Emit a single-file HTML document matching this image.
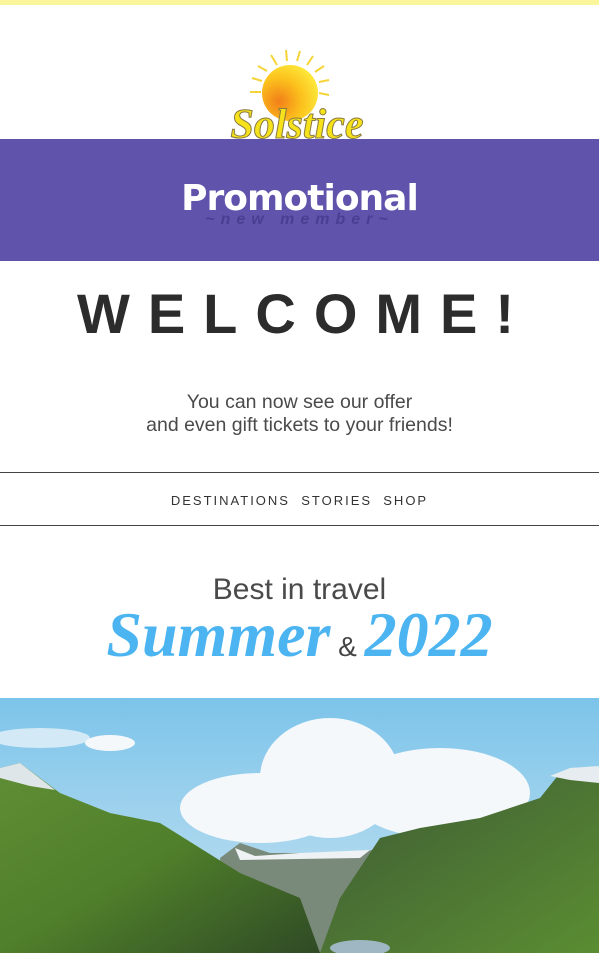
<!DOCTYPE html>
<html><head><meta charset="utf-8"><style>
*{margin:0;padding:0;box-sizing:border-box}
body{width:599px;height:953px;overflow:hidden;background:#fff;font-family:"Liberation Sans",sans-serif;position:relative}
.a{position:absolute}
</style></head><body>
<div class="a" style="left:0;top:0;width:599px;height:5px;background:#fbf59c"></div>
<svg class="a" style="left:205px;top:45px" width="180" height="100" viewBox="0 0 180 100">
<defs><radialGradient id="s" cx="0.3" cy="0.65" r="0.75"><stop offset="0" stop-color="#f27f1a"/><stop offset="0.55" stop-color="#fcc11c"/><stop offset="1" stop-color="#fde93a"/></radialGradient></defs>
<g stroke="#f5d437" stroke-width="2">
<line x1="72" y1="20" x2="66" y2="10"/><line x1="82" y1="16" x2="81" y2="5"/><line x1="92" y1="16" x2="95" y2="6"/><line x1="102" y1="20" x2="108" y2="11"/><line x1="110" y1="27" x2="119" y2="21"/><line x1="114" y1="37" x2="124" y2="35"/><line x1="114" y1="48" x2="124" y2="50"/><line x1="62" y1="26" x2="53" y2="21"/><line x1="57" y1="36" x2="47" y2="33"/><line x1="56" y1="47" x2="45" y2="47"/></g>
<circle cx="85" cy="48" r="28" fill="url(#s)"/>
<text x="92" y="93" text-anchor="middle" font-family="Liberation Serif,serif" font-style="italic" font-weight="bold" font-size="42" fill="#f6e21b" stroke="#8a7a40" stroke-width="1">Solstice</text>
</svg>
<div class="a" style="left:0;top:139px;width:599px;height:122px;background:#5f53ab"></div>
<div class="a" style="left:0;top:178px;width:599px;text-align:center;color:#fff;font-family:'DejaVu Sans',sans-serif;font-weight:bold;font-size:36px;letter-spacing:-1px">Promotional</div>
<div class="a" style="left:0;top:211px;width:599px;text-align:center;color:#4a3e93;font-style:italic;font-weight:bold;font-size:16px;letter-spacing:6px">~new member~</div>
<div class="a" style="left:0;top:281px;width:599px;text-align:center;color:#2c2c2c;font-weight:bold;font-size:56px;letter-spacing:18px;padding-left:10px">WELCOME!</div>
<div class="a" style="left:0;top:391px;width:599px;text-align:center;color:#4a4a4a;font-size:19.5px;line-height:23px">You can now see our offer<br>and even gift tickets to your friends!</div>
<div class="a" style="left:0;top:472px;width:599px;height:1px;background:#444"></div>
<div class="a" style="left:0;top:525px;width:599px;height:1px;background:#444"></div>
<div class="a" style="left:0;top:493px;width:599px;text-align:center;color:#333;font-size:13px;letter-spacing:2px">DESTINATIONS &nbsp;STORIES &nbsp;SHOP</div>
<div class="a" style="left:0;top:573px;width:599px;text-align:center;color:#4a4a4a;font-size:30px">Best in travel</div>
<div class="a" style="left:0;top:598px;width:599px;text-align:center;white-space:nowrap"><span style="color:#4bb4f1;font-family:'Liberation Serif',serif;font-style:italic;font-weight:bold;font-size:64px">Summer</span><span style="color:#444;font-size:28px"> &amp; </span><span style="color:#4bb4f1;font-family:'Liberation Serif',serif;font-style:italic;font-weight:bold;font-size:64px">2022</span></div>
<svg class="a" style="left:0;top:698px" width="599" height="255" viewBox="0 0 599 255">
<defs><linearGradient id="sky" x1="0" y1="0" x2="0" y2="1"><stop offset="0" stop-color="#7cc4ea"/><stop offset="1" stop-color="#c9e3f1"/></linearGradient>
<linearGradient id="gl" x1="0" y1="0" x2="1" y2="1"><stop offset="0" stop-color="#5f8e35"/><stop offset="0.5" stop-color="#4f7f2a"/><stop offset="1" stop-color="#2f4a25"/></linearGradient>
<linearGradient id="gr" x1="0" y1="0" x2="1" y2="1"><stop offset="0" stop-color="#3e5a35"/><stop offset="1" stop-color="#5a8d32"/></linearGradient></defs>
<rect width="599" height="255" fill="url(#sky)"/>
<g fill="#f4f8fb"><ellipse cx="330" cy="80" rx="70" ry="60"/><ellipse cx="440" cy="95" rx="90" ry="45"/><ellipse cx="260" cy="110" rx="80" ry="35"/><ellipse cx="110" cy="45" rx="25" ry="8"/><ellipse cx="40" cy="40" rx="50" ry="10" opacity="0.7"/></g>
<polygon points="220,160 240,145 270,155 360,155 380,150 340,255 230,255" fill="#7a8a7a"/>
<polygon points="235,150 255,158 300,155 370,152 360,160 240,162" fill="#eef2f4"/>
<polygon points="0,70 20,65 60,95 110,115 160,125 240,175 300,200 320,255 0,255" fill="url(#gl)"/>
<polygon points="0,70 20,65 55,92 30,88 0,80" fill="#dfe6ea"/>
<polygon points="320,255 340,200 380,140 420,130 480,120 540,100 560,75 599,70 599,255" fill="url(#gr)"/>
<polygon points="550,78 570,70 599,68 599,85 570,82" fill="#e6ecef"/>
<ellipse cx="360" cy="250" rx="30" ry="8" fill="#9fb7c2"/>
</svg>
</body></html>
